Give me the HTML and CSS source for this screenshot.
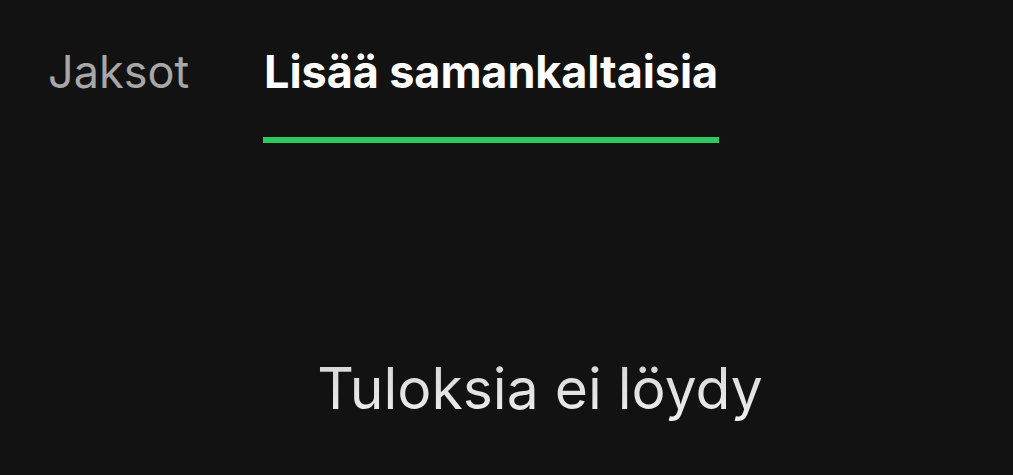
FILE: index.html
```html
<!DOCTYPE html>
<html lang="fi">
<head>
    <meta charset="UTF-8">
    <meta name="viewport" content="width=device-width, initial-scale=1.0">
    <title>Lisää samankaltaisia</title>
    <link rel="stylesheet" href="styles.css">
</head>
<body>
    <!-- Välilehdet -->
    <nav class="tabs">
        <a class="tab">Jaksot</a>
        <a class="tab active">Lisää samankaltaisia</a>
    </nav>

    <!-- Tyhjä tila -->
    <p class="empty"><span>Tuloksia ei löydy</span></p>
</body>
</html>
```

FILE: styles.css
```css
body {
    margin: 0;
    background-color: #121212;
    font-family: Inter, "Noto Sans", sans-serif;
    -webkit-font-smoothing: antialiased;
}
.tabs {
    display: flex;
    gap: 73px;
    padding: 44px 0 0 47px;
}
.tab {
    font-size: 45px;
    line-height: 56px;
    padding: 0 1px 37px;
    color: #a7a7a7;
    border-bottom: 6px solid transparent;
    cursor: pointer;
}
.tab.active {
    color: #ffffff;
    font-weight: 700;
    letter-spacing: -0.1px;
    border-bottom-color: #2ec95c;
}
.empty {
    margin: 211px 0 0 67px;
    text-align: center;
    font-size: 57px;
}
.empty span {
    background: linear-gradient(#d4d4d4, #f0f0f0);
    -webkit-background-clip: text;
    background-clip: text;
    color: transparent;
}
```
